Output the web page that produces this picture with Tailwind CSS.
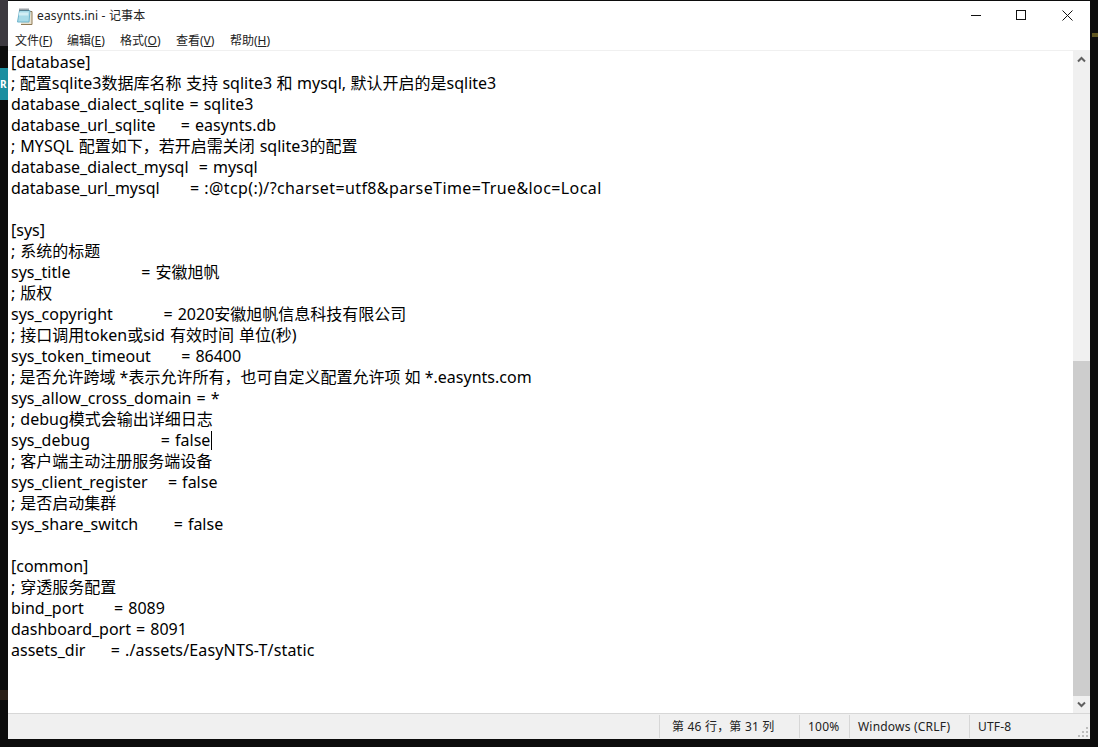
<!DOCTYPE html>
<html lang="zh-CN">
<head>
    <meta charset="UTF-8">
    <title>easynts.ini - 记事本</title>
    <script src="https://cdn.jsdelivr.net/npm/@tailwindcss/browser@4"></script>
</head>
<body class="h-[747px] w-[1098px] overflow-hidden bg-[#0c0c0c] font-['Noto_Sans','Noto_Sans_CJK_SC',sans-serif]">
    <div class="relative h-[747px] w-[1098px] overflow-hidden">
        <!-- desktop peeking out around the window -->
        <div class="absolute left-0 top-0 h-[46px] w-[8px] bg-[#3d3a40]"></div>
        <div class="absolute left-0 top-[68px] h-[32px] w-[8px] bg-[#1b8ea0] text-[10px] font-bold leading-[32px] text-white">R</div>
        <div class="absolute left-0 top-[690px] h-[10px] w-[8px] bg-[#2a2018]"></div>
        <div class="absolute right-0 top-[33px] h-[4px] w-[6px] bg-[#5f5520]"></div>

        <div class="absolute left-[8px] top-[1px] flex h-[738px] w-[1082px] flex-col bg-white">
            <!-- title bar -->
            <div class="flex h-[30px] shrink-0 items-center">
                <svg class="ml-[8px]" width="17" height="17" viewBox="0 0 17 17">
                    <path d="M6 3.500h10v13H5" fill="#e8e2d0" stroke="#8f7a55"/>
                    <path d="M3.500 2.500h10.500l-1 11.500H1.500z" fill="#a8dbe8" stroke="#6fb4cc"/>
                    <path d="M3 4.500h9.500l-.3 3H2.700z" fill="#d2eef4"/>
                    <path d="M4 .5v2.500M6 .5v2.500M8 .5v2.500M10 .5v2.500M12 .5v2.500" stroke="#3d4a55"/>
                </svg>
                <span class="ml-[4px] text-[12px] tracking-[0.15px] text-[#222]">easynts.ini - 记事本</span>
                <div class="-mt-[1px] ml-auto flex items-center pr-[17px]">
                    <svg class="mr-[34px]" width="11" height="11" viewBox="0 0 11 11"><path d="M0 5.500h10" stroke="#111"/></svg>
                    <svg class="mr-[35px]" width="11" height="11" viewBox="0 0 11 11"><rect x=".5" y=".5" width="9" height="9" fill="none" stroke="#111"/></svg>
                    <svg width="11" height="11" viewBox="0 0 11 11"><path d="M.5.500l10 10M10.500.500l-10 10" stroke="#111"/></svg>
                </div>
            </div>
            <!-- menu bar -->
            <div class="flex h-[19px] shrink-0 items-center pl-[7px] text-[12px] text-[#222]">
                <span class="w-[52px]">文件(<u>F</u>)</span>
                <span class="w-[53px]">编辑(<u>E</u>)</span>
                <span class="w-[56px]">格式(<u>O</u>)</span>
                <span class="w-[54px]">查看(<u>V</u>)</span>
                <span>帮助(<u>H</u>)</span>
            </div>
            <div class="h-[1px] shrink-0 bg-[#f0f0f0]"></div>
            <!-- editor -->
            <div class="flex min-h-0 flex-1">
                <div class="relative flex-1 overflow-hidden pl-[3px] pt-[1px] text-[16px] leading-[21px] [word-spacing:0.9px] whitespace-pre text-black"><div>[database]</div><div class="[word-spacing:0.3px]">; 配置sqlite3数据库名称 支持 sqlite3 和 mysql, 默认开启的是sqlite3</div><div>database_dialect_sqlite = sqlite3</div><div>database_url_sqlite     = easynts.db</div><div>; MYSQL 配置如下，若开启需关闭 sqlite3的配置</div><div>database_dialect_mysql  = mysql</div><div>database_url_mysql      = <span class="tracking-[0.4px]">:@tcp(:)/?charset=utf8&amp;parseTime=True&amp;loc=Local</span></div><div>&nbsp;</div><div>[sys]</div><div>; 系统的标题</div><div>sys_title              = 安徽旭帆</div><div>; 版权</div><div>sys_copyright          = 2020安徽旭帆信息科技有限公司</div><div>; 接口调用token或sid 有效时间 单位(秒)</div><div>sys_token_timeout      = 86400</div><div class="[word-spacing:0px]">; 是否允许跨域 *表示允许所有，也可自定义配置允许项 如 *.easynts.com</div><div>sys_allow_cross_domain = *</div><div>; debug模式会输出详细日志</div><div>sys_debug              = false<span class="absolute ml-[1px] mt-[1px] h-[19px] w-[1px] bg-black"></span></div><div>; 客户端主动注册服务端设备</div><div>sys_client_register    = false</div><div>; 是否启动集群</div><div>sys_share_switch       = false</div><div>&nbsp;</div><div>[common]</div><div>; 穿透服务配置</div><div>bind_port      = 8089</div><div>dashboard_port = 8091</div><div>assets_dir     = <span class="tracking-[0.15px]">./assets/EasyNTS-T/static</span></div></div>
                <!-- scrollbar -->
                <div class="flex w-[17px] shrink-0 flex-col bg-[#f0f0f0]">
                    <div class="flex h-[17px] shrink-0 items-center justify-center">
                        <svg width="9" height="7" viewBox="0 0 9 7"><path d="M1 5.500l3.500-3.500 3.500 3.500" fill="none" stroke="#606060" stroke-width="2"/></svg>
                    </div>
                    <div class="h-[293px] shrink-0"></div>
                    <div class="min-h-0 flex-1 bg-[#cdcdcd]"></div>
                    <div class="flex h-[17px] shrink-0 items-center justify-center">
                        <svg width="9" height="7" viewBox="0 0 9 7"><path d="M1 1.500l3.500 3.500 3.500-3.500" fill="none" stroke="#606060" stroke-width="2"/></svg>
                    </div>
                </div>
            </div>
            <!-- status bar -->
            <div class="relative flex h-[26px] shrink-0 items-stretch border-t border-[#d7d7d7] bg-[#f0f0f0] text-[12px] tracking-[0.2px] text-[#222]">
                <div class="w-[651px] shrink-0"></div>
                <div class="my-[1px] flex w-[140px] shrink-0 items-center border-l border-[#d7d7d7] pl-[12px] whitespace-pre">第 46 行，第 31 列</div>
                <div class="my-[1px] flex w-[50px] shrink-0 items-center border-l border-[#d7d7d7] pl-[8px]">100%</div>
                <div class="my-[1px] flex w-[120px] shrink-0 items-center border-l border-[#d7d7d7] pl-[8px]">Windows (CRLF)</div>
                <div class="my-[1px] flex flex-1 items-center border-l border-[#d7d7d7] pl-[8px]">UTF-8</div>
                <svg class="absolute bottom-[1px] right-[1px]" width="12" height="12" viewBox="0 0 12 12"><path d="M9 1h2v2H9zM5 5h2v2H5zM9 5h2v2H9zM1 9h2v2H1zM5 9h2v2H5zM9 9h2v2H9z" fill="#bdbdbd"/></svg>
            </div>
        </div>
    </div>
</body>
</html>
